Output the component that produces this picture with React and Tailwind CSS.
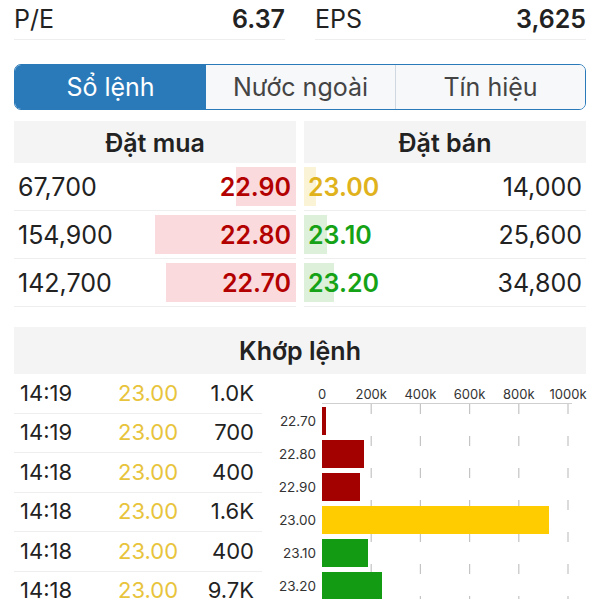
import React from "react";

const bids = [
  { qty: "67,700", price: "22.90", bar: 60 },
  { qty: "154,900", price: "22.80", bar: 141 },
  { qty: "142,700", price: "22.70", bar: 130 },
];

const asks = [
  { price: "23.00", qty: "14,000", bar: 12, text: "text-[#e0b21c]", bg: "bg-[#faf3d6]" },
  { price: "23.10", qty: "25,600", bar: 23, text: "text-[#16a216]", bg: "bg-[#dcf0da]" },
  { price: "23.20", qty: "34,800", bar: 30, text: "text-[#16a216]", bg: "bg-[#dcf0da]" },
];

const trades = [
  ["14:19", "23.00", "1.0K"],
  ["14:19", "23.00", "700"],
  ["14:18", "23.00", "400"],
  ["14:18", "23.00", "1.6K"],
  ["14:18", "23.00", "400"],
  ["14:18", "23.00", "9.7K"],
];

const volume = [
  { label: "22.70", w: 4, color: "#a30000" },
  { label: "22.80", w: 42, color: "#a30000" },
  { label: "22.90", w: 38, color: "#a30000" },
  { label: "23.00", w: 227, color: "#ffcc00" },
  { label: "23.10", w: 46, color: "#139b13" },
  { label: "23.20", w: 60, color: "#139b13" },
];

const ticks = ["0", "200k", "400k", "600k", "800k", "1000k"];

function VolumeChart() {
  return (
    <svg width="338" height="225" className="block" style={{ fontFamily: "Inter, 'Liberation Sans', sans-serif" }}>
      {ticks.map((t, i) => (
        <text key={t} x={60 + i * 49.2} y="25" fontSize="13" fill="#333" textAnchor="middle">
          {t}
        </text>
      ))}
      <line x1="60" y1="29.5" x2="310" y2="29.5" stroke="#cfcfcf" strokeWidth="1" />
      {ticks.slice(1).map((t, i) => (
        <line
          key={t}
          x1={60 + (i + 1) * 49.2}
          y1="30"
          x2={60 + (i + 1) * 49.2}
          y2="225"
          stroke="#c4c4c4"
          strokeWidth="1.2"
          strokeDasharray="10 22"
        />
      ))}
      {volume.map((v, i) => (
        <g key={v.label}>
          <text x="54" y={52 + i * 33} fontSize="13.5" fill="#333" textAnchor="end">
            {v.label}
          </text>
          <rect x="60" y={33 + i * 33} width={v.w} height="28" fill={v.color} />
        </g>
      ))}
    </svg>
  );
}

export default function App() {
  return (
    <div className="w-[600px] h-[600px] overflow-hidden bg-white text-[#222]" style={{ fontFamily: "Inter, 'Liberation Sans', sans-serif" }}>

      {/* stats */}
      <div className="flex gap-[30px] px-[14px]">
        <div className="flex-1 h-[40px] flex items-center justify-between border-b border-[#eeeeee] text-[25px]">
          <span>P/E</span>
          <span className="font-semibold">6.37</span>
        </div>
        <div className="flex-1 h-[40px] flex items-center justify-between border-b border-[#eeeeee] text-[25px]">
          <span>EPS</span>
          <span className="font-semibold">3,625</span>
        </div>
      </div>

      {/* tabs */}
      <div className="mx-[14px] mt-[24px] h-[46px] flex rounded-[7px] border border-[#2a7ab9] overflow-hidden text-[25px]">
        <div className="w-[191px] flex items-center justify-center pt-[2px] bg-[#2a7ab9] text-white">Sổ lệnh</div>
        <div className="flex-1 flex items-center justify-center pt-[2px] bg-[#f6f8fa] text-[#444] border-r border-[#cfd8e0]">Nước ngoài</div>
        <div className="flex-1 flex items-center justify-center pt-[2px] bg-[#f6f8fa] text-[#444]">Tín hiệu</div>
      </div>

      {/* order book */}
      <div className="flex gap-[8px] px-[14px] mt-[11px]">
        <div className="flex-1">
          <div className="h-[42px] pt-[3px] bg-[#f4f4f4] flex items-center justify-center text-[25px] font-semibold">Đặt mua</div>
          {bids.map((b) => (
            <div key={b.price} className="h-[48px] flex items-center justify-between border-b border-[#eeeeee] text-[25px]">
              <span className="pl-[4px] pt-[3px]">{b.qty}</span>
              <div className="h-[39px] pt-[3px] flex items-center justify-end bg-[#fadadc] pr-[5px]" style={{ width: b.bar }}>
                <span className="font-semibold text-[#b30000]">{b.price}</span>
              </div>
            </div>
          ))}
        </div>
        <div className="flex-1">
          <div className="h-[42px] pt-[3px] bg-[#f4f4f4] flex items-center justify-center text-[25px] font-semibold">Đặt bán</div>
          {asks.map((a) => (
            <div key={a.price} className="relative h-[48px] flex items-center justify-between border-b border-[#eeeeee] text-[25px]">
              <div className={"absolute left-0 top-[4px] h-[39px] " + a.bg} style={{ width: a.bar }} />
              <span className={"relative pl-[4px] pt-[3px] font-semibold " + a.text}>{a.price}</span>
              <span className="pr-[4px] pt-[3px]">{a.qty}</span>
            </div>
          ))}
        </div>
      </div>

      {/* matched orders */}
      <div className="mx-[14px] mt-[20px] h-[47px] pt-[2px] bg-[#f4f4f4] flex items-center justify-center text-[25px] font-semibold">Khớp lệnh</div>
      <div className="flex pl-[14px]">
        <div className="w-[248px]">
          {trades.map((t, i) => (
            <div key={i} className="h-[39.5px] flex items-center border-b border-[#eeeeee] text-[22px]">
              <span className="w-[104px] pl-[6px]">{t[0]}</span>
              <span className="text-[#e8c43c]">{t[1]}</span>
              <span className="ml-auto pr-[8px]">{t[2]}</span>
            </div>
          ))}
        </div>
        <VolumeChart />
      </div>
    </div>
  );
}
